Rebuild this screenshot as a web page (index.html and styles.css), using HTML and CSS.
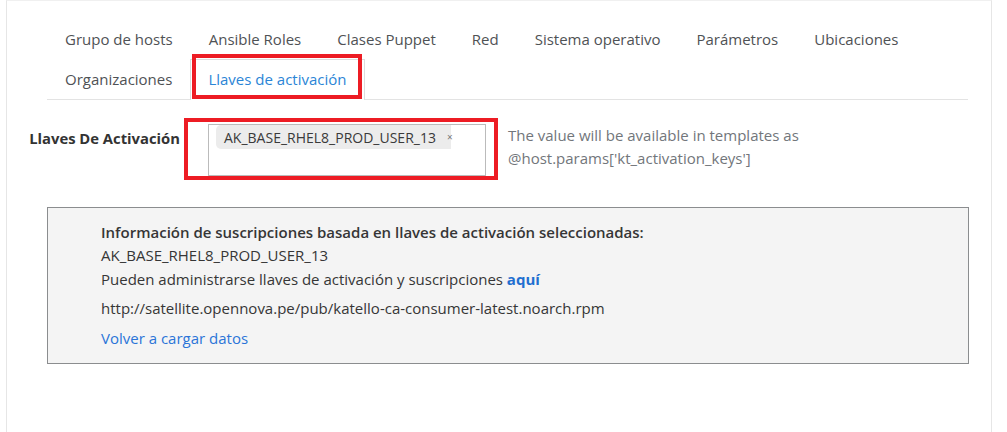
FILE: index.html
```html
<!DOCTYPE html>
<html lang="es">
<head>
<meta charset="utf-8">
<title>Llaves de activación</title>
<link rel="stylesheet" href="styles.css">
</head>
<body>
<div class="panel">
  <ul class="tabs">
    <li class="tab">Grupo de hosts</li>
    <li class="tab">Ansible Roles</li>
    <li class="tab">Clases Puppet</li>
    <li class="tab">Red</li>
    <li class="tab">Sistema operativo</li>
    <li class="tab">Parámetros</li>
    <li class="tab">Ubicaciones</li>
    <li class="tab">Organizaciones</li>
    <li class="tab active">Llaves de activación<span class="mark mark-tab"></span></li>
  </ul>

  <div class="form-row">
    <label class="form-label">Llaves De Activación</label>
    <div class="select-box">
      <span class="chip">AK_BASE_RHEL8_PROD_USER_13<span class="chip-x">×</span></span>
      <span class="mark mark-input"></span>
    </div>
    <div class="help">The value will be available in templates as<br>@host.params['kt_activation_keys']</div>
  </div>

  <div class="info">
    <div class="info-title">Información de suscripciones basada en llaves de activación seleccionadas:</div>
    <div class="info-line">AK_BASE_RHEL8_PROD_USER_13</div>
    <div class="info-line">Pueden administrarse llaves de activación y suscripciones <a class="strong-link" href="#">aquí</a></div>
    <div class="info-line url">http://satellite.opennova.pe/pub/katello-ca-consumer-latest.noarch.rpm</div>
    <div class="info-line reload"><a class="link" href="#">Volver a cargar datos</a></div>
  </div>
</div>
</body>
</html>
```

FILE: styles.css
```css
html, body {
  margin: 0;
  padding: 0;
  background: #ffffff;
}

body {
  font-family: "Open Sans", "Noto Sans", sans-serif;
  color: #363636;
}

.panel {
  margin-left: 6px;
  width: 986px;
  height: 440px;
  border-left: 1px solid #e6e6e6;
  border-right: 1px solid #e6e6e6;
  border-top: 1px solid #f0f0f0;
  box-sizing: border-box;
  padding: 18px 0 0 40px;
}

.tabs {
  list-style: none;
  margin: 0;
  padding: 0;
  width: 921px;
  display: flex;
  flex-wrap: wrap;
  border-bottom: 1px solid #e3e3e3;
  font-size: 15px;
}

.tab {
  position: relative;
  padding: 0 17px;
  height: 39px;
  line-height: 38px;
  border: 1px solid transparent;
  border-bottom: 0;
  color: #4f5255;
  white-space: nowrap;
}

.tab.active {
  color: #2b85d6;
  border-color: #dddddd;
  background: #ffffff;
  margin-bottom: -1px;
  height: 40px;
}

.mark {
  position: absolute;
  border: 4px solid #ed1c24;
  box-sizing: border-box;
  pointer-events: none;
}

.mark-tab {
  left: 1px;
  top: -6px;
  width: 170px;
  height: 45px;
}

.form-row {
  display: flex;
  align-items: flex-start;
  margin: 24px 0 0 -40px;
}

.form-label {
  width: 173px;
  text-align: right;
  font-weight: 700;
  font-size: 14.8px;
  color: #333333;
  padding-top: 4px;
  line-height: 20px;
}

.select-box {
  position: relative;
  margin-left: 28px;
  width: 278px;
  height: 52px;
  border: 1px solid #bbbbbb;
  box-sizing: border-box;
  padding: 0 0 0 7px;
}

.chip {
  display: inline-flex;
  align-items: center;
  height: 24px;
  width: 235px;
  box-sizing: border-box;
  padding-left: 8px;
  background: #ececec;
  border-radius: 5px 0 0 5px;
  font-size: 14px;
  color: #3a3a3a;
}

.chip-x {
  margin-left: 11px;
  font-size: 10px;
  color: #777777;
}

.mark-input {
  left: -25px;
  top: -7px;
  width: 314px;
  height: 62px;
}

.help {
  margin-left: 22px;
  padding-top: 0;
  font-size: 15px;
  line-height: 23px;
  color: #72767b;
}

.info {
  margin-top: 31px;
  width: 922px;
  height: 157px;
  box-sizing: border-box;
  border: 1px solid #8b8d8f;
  background: #f4f4f4;
  padding: 13px 0 0 53px;
  font-size: 15px;
  color: #363636;
}

.info-title {
  font-weight: 600;
  line-height: 23px;
}

.info-line {
  line-height: 23px;
}

.info-line + .info-line {
  margin-top: 1px;
}

.url {
  margin-top: 6px !important;
}

.reload {
  margin-top: 7px !important;
}

.strong-link {
  color: #1f6fd0;
  font-weight: 700;
  text-decoration: none;
}

.link {
  color: #2b74d8;
  text-decoration: none;
}
```
